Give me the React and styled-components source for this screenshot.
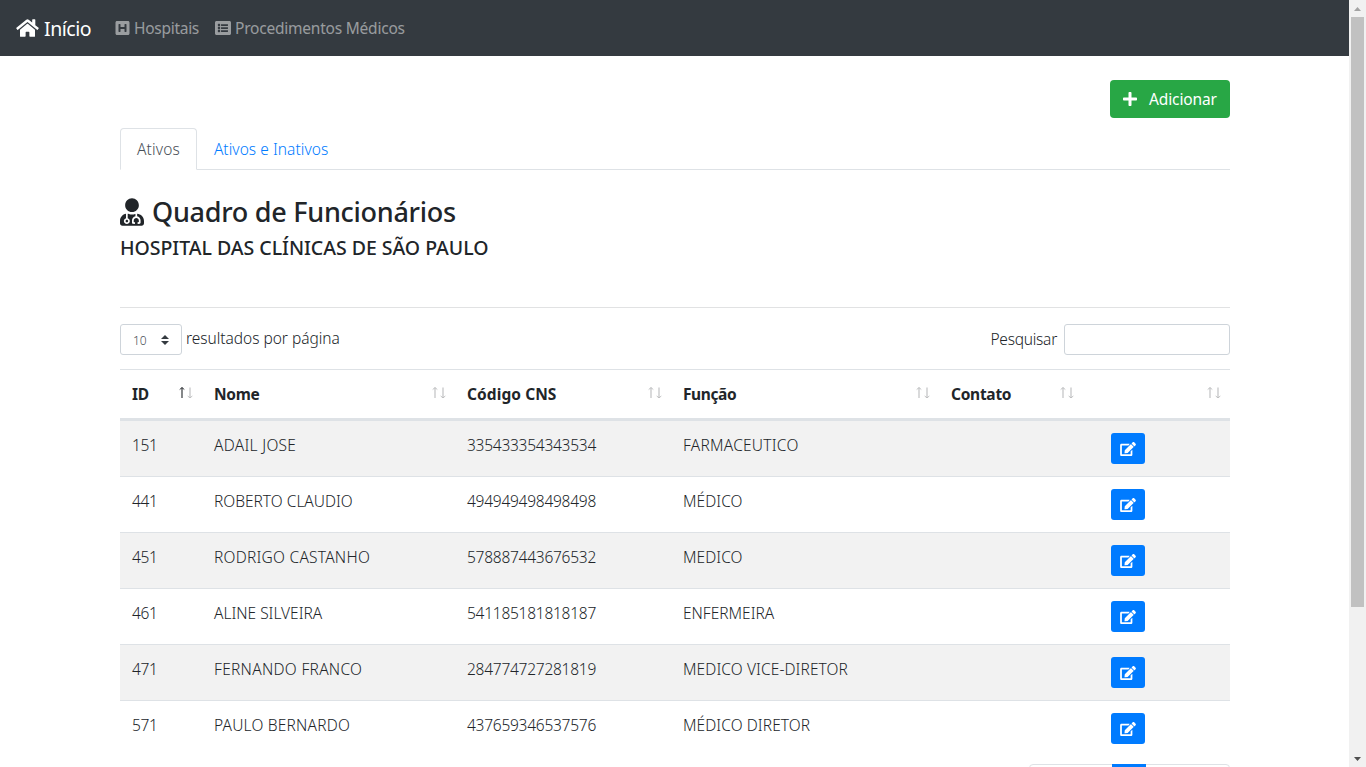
import React from "react";
import styled, { createGlobalStyle } from "styled-components";
import { FaHome, FaHSquare, FaListAlt, FaPlus, FaUserMd, FaEdit } from "react-icons/fa";

const GlobalStyle = createGlobalStyle`
  *, *::before, *::after { box-sizing: border-box; }
  body {
    margin: 0;
    overflow: hidden;
    background: #fff;
    color: #212529;
    font-family: "Segoe UI", "Noto Sans", "Open Sans", sans-serif;
    font-size: 15.5px;
    font-weight: 330;
    line-height: 24px;
  }
`;

const Viewport = styled.div`
  display: flex;
  height: 767px;
  overflow: hidden;
`;

const Page = styled.div`
  flex: 1;
  min-width: 0;
  overflow: hidden;
`;

const Text = styled.span`
  white-space: pre;
  letter-spacing: ${(p) => p.$track || 0}px;
`;

const Navbar = styled.nav`
  display: flex;
  align-items: center;
  height: 56px;
  padding: 0 16px;
  background: #343a40;
  font-weight: 400;
`;

const Brand = styled.a`
  display: flex;
  align-items: center;
  width: 99px;
  gap: 5px;
  color: #fff;
  font-size: 19.5px;
  svg { width: 23px; height: 20px; }
  span { padding-top: 1px; }
`;

const NavLink = styled.a`
  display: flex;
  align-items: center;
  gap: 4px;
  width: ${(p) => p.$width}px;
  color: rgba(255, 255, 255, 0.5);
  svg { height: 16px; width: ${(p) => p.$icon}px; }
`;

const Container = styled.main`
  width: 1110px;
  margin: 24px 0 0 120px;
`;

const Actions = styled.div`
  display: flex;
  justify-content: flex-end;
`;

const AddButton = styled.button`
  display: flex;
  align-items: center;
  gap: 12px;
  width: 120px;
  height: 38px;
  padding: 0 0 0 13px;
  border: 0;
  border-radius: 4px;
  background: #28a745;
  color: #fff;
  font: inherit;
  font-weight: 400;
  svg { width: 14px; height: 16px; }
`;

const Tabs = styled.div`
  display: flex;
  height: 42px;
  margin-top: 10px;
  border-bottom: 1px solid #dee2e6;
`;

const Tab = styled.a`
  height: 42px;
  padding: 8px 16px;
  border: 1px solid ${(p) => (p.$active ? "#dee2e6" : "transparent")};
  border-bottom-color: ${(p) => (p.$active ? "#fff" : "transparent")};
  border-radius: 4px 4px 0 0;
  background: ${(p) => (p.$active ? "#fff" : "transparent")};
  color: ${(p) => (p.$active ? "#495057" : "#007bff")};
`;

const Title = styled.h3`
  display: flex;
  align-items: center;
  gap: 8px;
  height: 34px;
  margin: 25px 0 0;
  font-size: 27px;
  font-weight: 500;
  line-height: 34px;
  svg { width: 24px; height: 28px; }
`;

const Subtitle = styled.h5`
  height: 24px;
  margin: 7px 0 0;
  font-size: 19.5px;
  font-weight: 500;
  line-height: 24px;
`;

const Divider = styled.hr`
  height: 1px;
  margin: 47px 0 16px;
  border: 0;
  background: #e1e2e3;
`;

const Toolbar = styled.div`
  display: flex;
  align-items: center;
  justify-content: space-between;
  height: 31px;
`;

const Field = styled.label`
  display: flex;
  align-items: center;
  gap: ${(p) => p.$gap}px;
  > span:not(:first-child) { padding-bottom: 3px; }
`;

const FieldLabel = styled(Text)`
  padding-bottom: 1px;
`;

const PageSize = styled.span`
  display: flex;
  align-items: center;
  justify-content: space-between;
  width: 62px;
  height: 31px;
  padding: 2px 12px 0;
  border: 1px solid #ced4da;
  border-radius: 3px;
  color: #495057;
  font-size: 12px;
  svg { margin-bottom: 2px; }
`;

const SearchInput = styled.input`
  width: 166px;
  height: 31px;
  border: 1px solid #ced4da;
  border-radius: 3px;
`;

const Table = styled.table`
  width: 1110px;
  margin-top: 14px;
  border-spacing: 0;
  table-layout: fixed;
`;

const HeaderCell = styled.th`
  height: 51px;
  padding: 0 9px 0 12px;
  border-top: 1px solid #dee2e6;
  border-bottom: 2px solid #dee2e6;
  font-weight: 700;
  text-align: left;
`;

const HeaderContent = styled.div`
  display: flex;
  justify-content: space-between;
  align-items: center;
  svg { margin-bottom: 2px; }
`;

const Row = styled.tr`
  background: ${(p) => (p.$striped ? "#f2f2f2" : "#fff")};
`;

const Cell = styled.td`
  height: 56px;
  padding: 12px 12px 0;
  border-top: 1px solid #dee2e6;
  vertical-align: top;
  white-space: nowrap;
`;

const EditButton = styled.button`
  display: flex;
  align-items: center;
  justify-content: center;
  width: 34px;
  height: 31px;
  margin-left: 16px;
  padding: 0;
  border: 0;
  border-radius: 3px;
  background: #007bff;
  color: #fff;
  svg { width: 16px; height: 14px; }
`;

const Pagination = styled.div`
  display: flex;
  width: 201px;
  height: 38px;
  margin: 8px 0 0 auto;
  border: 1px solid #dee2e6;
  border-radius: 4px;
`;

const CurrentPage = styled.span`
  width: 34px;
  height: 38px;
  margin: -1px 0 0 82px;
  background: #007bff;
`;

const Scrollbar = styled.aside`
  display: flex;
  flex-direction: column;
  align-items: center;
  justify-content: space-between;
  width: 17px;
  background: #f1f1f1;
`;

const ScrollTrack = styled.div`
  flex: 1;
  width: 13px;
`;

const ScrollThumb = styled.div`
  height: 590px;
  background: #c1c1c1;
`;

const ScrollArrow = styled.svg`
  display: block;
  width: 17px;
  height: 17px;
  fill: ${(p) => p.$color};
`;

function SortIcon({ ascending }) {
  return (
    <svg width="14" height="12" viewBox="0 0 14 12" fill="none" stroke="#212529">
      <g opacity={ascending ? 1 : 0.3}>
        <path d="M3 0.5V11" strokeWidth="1.1" />
        <path d="M0.7 2.5L3 0.6L5.3 2.5" strokeWidth="0.9" />
      </g>
      <g opacity="0.3">
        <path d="M11 0.5V11" strokeWidth="1.1" />
        <path d="M8.7 9L11 10.9L13.3 9" strokeWidth="0.9" />
      </g>
    </svg>
  );
}

const columns = [
  { label: "ID", width: 82, track: -0.4, ascending: true },
  { label: "Nome", width: 253, track: -0.3 },
  { label: "Código CNS", width: 216, track: 0.08 },
  { label: "Função", width: 268, track: -0.4 },
  { label: "Contato", width: 144, track: -0.27 },
  { label: "", width: 147 },
];

const employees = [
  { id: "151", name: "ADAIL JOSE", nameTrack: 0.3, cns: "335433354343534", role: "FARMACEUTICO", roleTrack: 0.25 },
  { id: "441", name: "ROBERTO CLAUDIO", nameTrack: 0, cns: "494949498498498", role: "MÉDICO", roleTrack: 0.05 },
  { id: "451", name: "RODRIGO CASTANHO", nameTrack: 0.25, cns: "578887443676532", role: "MEDICO", roleTrack: 0.05 },
  { id: "461", name: "ALINE SILVEIRA", nameTrack: 0, cns: "541185181818187", role: "ENFERMEIRA", roleTrack: 0 },
  { id: "471", name: "FERNANDO FRANCO", nameTrack: 0.3, cns: "284774727281819", role: "MEDICO VICE-DIRETOR", roleTrack: 0.1 },
  { id: "571", name: "PAULO BERNARDO", nameTrack: 0.2, cns: "437659346537576", role: "MÉDICO DIRETOR", roleTrack: 0.08 },
];

export default function App() {
  return (
    <>
      <GlobalStyle />
      <Viewport>
        <Page>
          <Navbar>
            <Brand><FaHome /><Text $track={-0.45}>Início</Text></Brand>
            <NavLink $width={100} $icon={15}><FaHSquare /><Text $track={-0.28}>Hospitais</Text></NavLink>
            <NavLink $width={200} $icon={16}><FaListAlt /><Text $track={-0.22}>Procedimentos Médicos</Text></NavLink>
          </Navbar>
          <Container>
            <Actions>
              <AddButton><FaPlus /><Text $track={-0.12}>Adicionar</Text></AddButton>
            </Actions>
            <Tabs>
              <Tab $active><Text $track={0.15}>Ativos</Text></Tab>
              <Tab><Text $track={0.05}>Ativos e Inativos</Text></Tab>
            </Tabs>
            <Title><FaUserMd /><Text $track={-0.27}>Quadro de Funcionários</Text></Title>
            <Subtitle><Text $track={-0.03}>HOSPITAL DAS CLÍNICAS DE SÃO PAULO</Text></Subtitle>
            <Divider />
            <Toolbar>
              <Field $gap={4}>
                <PageSize>
                  <Text>10</Text>
                  <svg width="8" height="10" viewBox="0 0 8 10" fill="#343a40">
                    <path d="M4 0L8 4H0zM0 6H8L4 10z" />
                  </svg>
                </PageSize>
                <Text $track={-0.03}>resultados por página</Text>
              </Field>
              <Field $gap={7}>
                <FieldLabel $track={-0.25}>Pesquisar</FieldLabel>
                <SearchInput />
              </Field>
            </Toolbar>
            <Table>
              <colgroup>
                {columns.map((c, i) => <col key={i} width={c.width} />)}
              </colgroup>
              <thead>
                <tr>
                  {columns.map((c, i) => (
                    <HeaderCell key={i}>
                      <HeaderContent>
                        <Text $track={c.track}>{c.label}</Text>
                        <SortIcon ascending={c.ascending} />
                      </HeaderContent>
                    </HeaderCell>
                  ))}
                </tr>
              </thead>
              <tbody>
                {employees.map((e, i) => (
                  <Row key={e.id} $striped={i % 2 === 0}>
                    <Cell><Text $track={-0.3}>{e.id}</Text></Cell>
                    <Cell><Text $track={e.nameTrack}>{e.name}</Text></Cell>
                    <Cell><Text $track={-0.25}>{e.cns}</Text></Cell>
                    <Cell><Text $track={e.roleTrack}>{e.role}</Text></Cell>
                    <Cell />
                    <Cell><EditButton><FaEdit /></EditButton></Cell>
                  </Row>
                ))}
              </tbody>
            </Table>
            <Pagination><CurrentPage /></Pagination>
          </Container>
        </Page>
        <Scrollbar>
          <ScrollArrow $color="#a3a3a3" viewBox="0 0 17 17"><path d="M8.5 7L12 11H5z" /></ScrollArrow>
          <ScrollTrack><ScrollThumb /></ScrollTrack>
          <ScrollArrow $color="#505050" viewBox="0 0 17 17"><path d="M5 7H12L8.5 11z" /></ScrollArrow>
        </Scrollbar>
      </Viewport>
    </>
  );
}
